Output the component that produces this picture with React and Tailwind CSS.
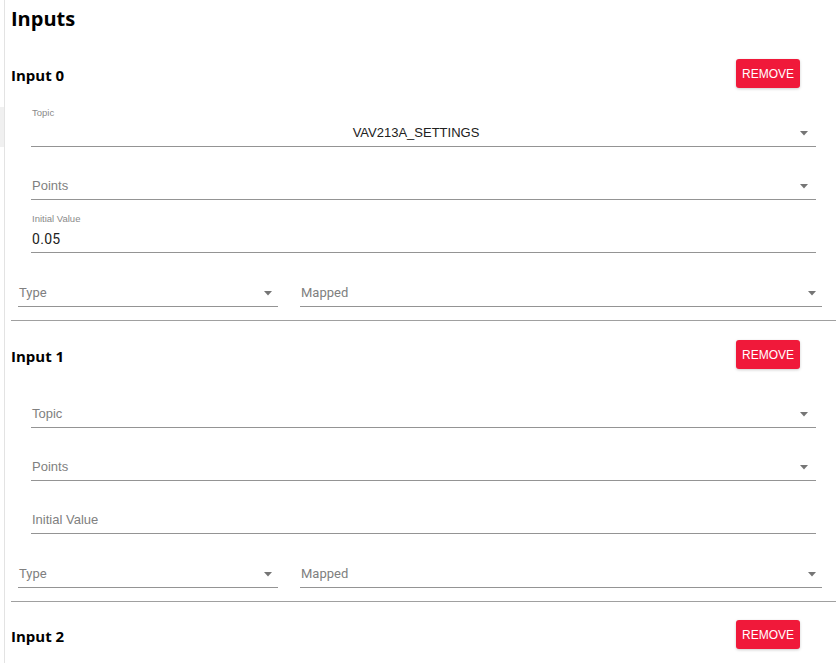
import React from "react";

const caret = (
  <svg width="8" height="5" viewBox="0 0 8 5" className="shrink-0">
    <path d="M0 0h8L4 4.5z" fill="#757575" />
  </svg>
);

function Field({ label, value, placeholder, select, center, className = "", pr = "pr-[8px]" }) {
  return (
    <div className={`h-[53px] shrink-0 border-b border-[#949494] flex flex-col ${className}`}>
      <div className="h-[25px] pt-[13px] pl-[1px] text-[9.5px] leading-[12px] text-[#8a8a8a] font-['Liberation_Sans',sans-serif]">
        {label}
      </div>
      <div className={`mt-[3px] h-[22px] flex items-center ${pr}`}>
        <div
          className={`flex-1 min-w-0 pl-[1px] ${center && value ? "text-center" : ""} ${
            value ? "text-[#212121]" : "text-[#808080]"
          } text-[13px]`}
        >
          {value || placeholder}
        </div>
        {select && caret}
      </div>
    </div>
  );
}

function InputSection({ index, topic, initial }) {
  return (
    <div className="flex flex-col shrink-0">
      <div className="h-[29px] shrink-0 flex items-center justify-between pr-[36px]">
        <h3 className="pt-[3px] text-[15px] font-bold text-black font-['Open_Sans',sans-serif]">Input {index}</h3>
        <button className="w-[64px] h-[29px] rounded-[3px] bg-[#f0193a] text-white text-[12px] font-['Liberation_Sans',sans-serif] shadow-[0_1px_3px_rgba(0,0,0,0.2)]">
          REMOVE
        </button>
      </div>
      <div className="mt-[6px] ml-[20px] mr-[20px] flex flex-col font-['Liberation_Sans',sans-serif]">
        <Field
          label={topic ? "Topic" : ""}
          value={topic}
          placeholder="Topic"
          select
          center
        />
        <Field placeholder="Points" select />
        <Field
          label={initial ? "Initial Value" : ""}
          value={initial ? <span className="font-['Roboto',sans-serif] text-[14px] tracking-[0.3px]">{initial}</span> : null}
          placeholder="Initial Value"
        />
      </div>
      <div className="mt-[1px] ml-[7px] mr-[14px] flex gap-[22px] font-['Roboto',sans-serif]">
        <Field className="w-[260px]" placeholder="Type" select pr="pr-[6px]" />
        <Field className="flex-1" placeholder="Mapped" select pr="pr-[6px]" />
      </div>
    </div>
  );
}

export default function App() {
  return (
    <div className="flex w-[836px] h-[663px] overflow-hidden bg-white">
      <div className="w-[4px] shrink-0">
        <div className="mt-[107px] h-[40px] bg-[#f0f0f0]" />
      </div>
      <div className="flex-1 border-l border-[#e3e3e3] pl-[6px] flex flex-col">
        <h2 className="shrink-0 pt-[5px] h-[33px] text-[20px] leading-[28px] font-bold text-black font-['Open_Sans',sans-serif]">
          Inputs
        </h2>
        <div className="mt-[26px] shrink-0">
          <InputSection index={0} topic="VAV213A_SETTINGS" initial="0.05" />
        </div>
        <div className="mt-[13px] h-px shrink-0 bg-[#a0a0a0]" />
        <div className="mt-[19px] shrink-0">
          <InputSection index={1} />
        </div>
        <div className="mt-[13px] h-px shrink-0 bg-[#a0a0a0]" />
        <div className="mt-[18px] shrink-0">
          <InputSection index={2} />
        </div>
      </div>
    </div>
  );
}
